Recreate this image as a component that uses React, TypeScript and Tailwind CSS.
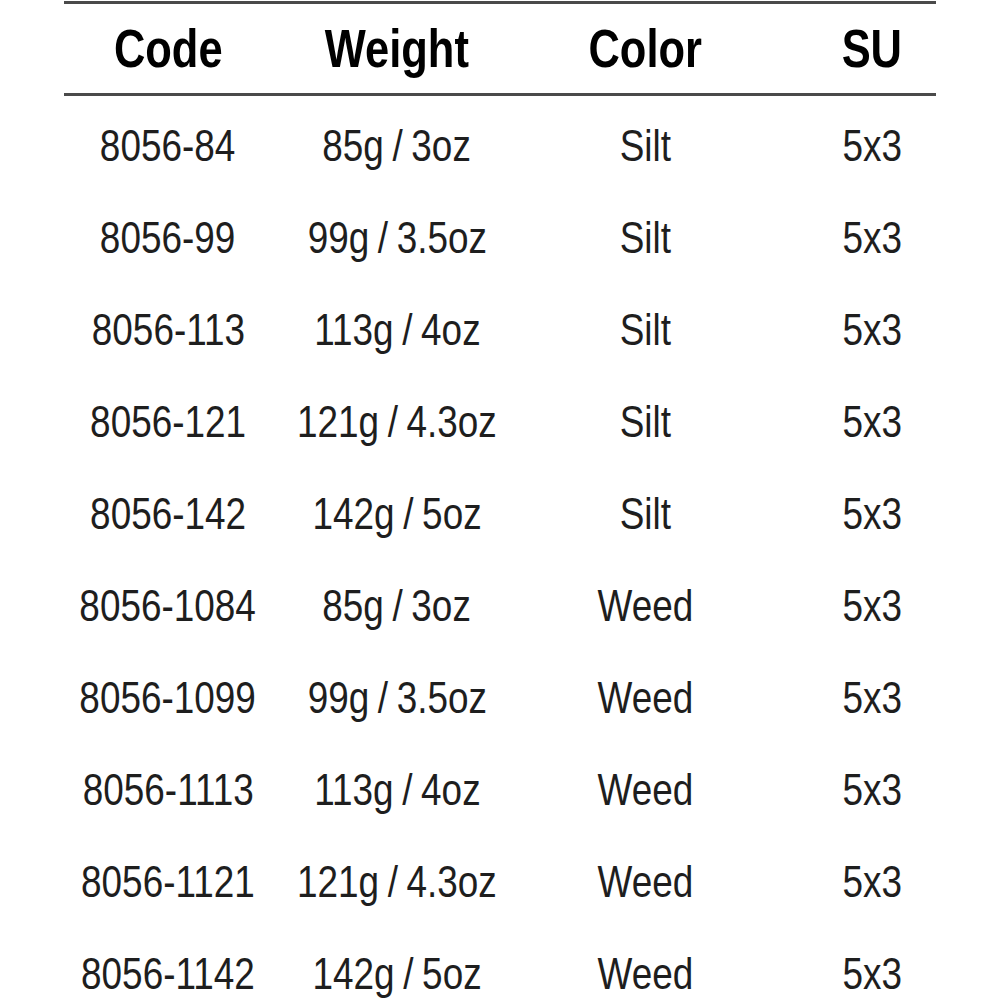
const rows = [
  ["8056-84", "85g / 3oz", "Silt", "5x3"],
  ["8056-99", "99g / 3.5oz", "Silt", "5x3"],
  ["8056-113", "113g / 4oz", "Silt", "5x3"],
  ["8056-121", "121g / 4.3oz", "Silt", "5x3"],
  ["8056-142", "142g / 5oz", "Silt", "5x3"],
  ["8056-1084", "85g / 3oz", "Weed", "5x3"],
  ["8056-1099", "99g / 3.5oz", "Weed", "5x3"],
  ["8056-1113", "113g / 4oz", "Weed", "5x3"],
  ["8056-1121", "121g / 4.3oz", "Weed", "5x3"],
  ["8056-1142", "142g / 5oz", "Weed", "5x3"],
];

const Cell = ({ children, className = "" }: { children: string; className?: string }) => (
  <div className={"flex justify-center whitespace-nowrap " + className}>
    <span className="inline-block scale-x-[0.82] [word-spacing:-2px]">{children}</span>
  </div>
);

export default function App() {
  return (
    <div className="w-[1000px] h-[1000px] overflow-hidden bg-white font-['Liberation_Sans',Arial,sans-serif]">
      <div className="mx-auto w-[872px] mt-[1px] border-t-[3px] border-[#4a4a4a]">
        <div className="grid grid-cols-[208px_250px_246px_168px] h-[92px] items-center border-b-[3px] border-[#4a4a4a] text-[53px] font-bold text-black leading-none">
          <Cell>Code</Cell>
          <Cell>Weight</Cell>
          <Cell>Color</Cell>
          <Cell className="pl-10">SU</Cell>
        </div>
        <div className="pt-[3px]">
          {rows.map((r) => (
            <div
              key={r[0]}
              className="grid grid-cols-[208px_250px_246px_168px] h-[92px] items-center text-[45px] text-[#1e1e1e] leading-none"
            >
              <Cell>{r[0]}</Cell>
              <Cell>{r[1]}</Cell>
              <Cell>{r[2]}</Cell>
              <Cell className="pl-10">{r[3]}</Cell>
            </div>
          ))}
        </div>
      </div>
    </div>
  );
}
